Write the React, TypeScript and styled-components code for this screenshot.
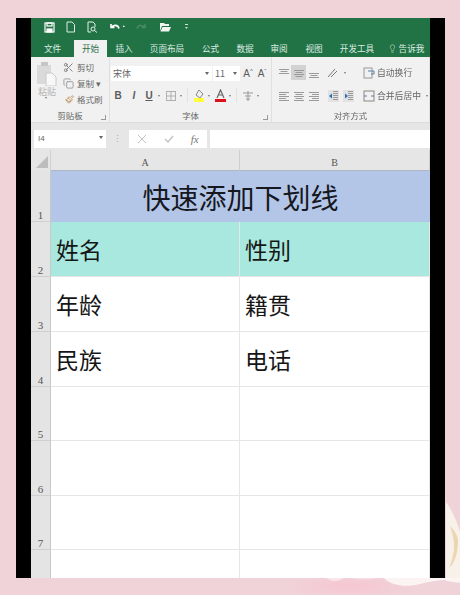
import * as React from 'react';
import styled, { createGlobalStyle } from 'styled-components';
import { Scissors, Copy, Paintbrush, Lightbulb } from 'lucide-react';

const CJK = `"Noto Sans CJK SC", "Liberation Sans", sans-serif`;

const GlobalStyle = createGlobalStyle`
  html, body { margin: 0; padding: 0; }
  body {
    width: 460px;
    height: 595px;
    overflow: hidden;
    background: #f0d3d9;
    font-family: ${CJK};
  }
`;

const Page = styled.div`
  position: relative;
  width: 460px;
  height: 595px;
  box-sizing: border-box;
  padding: 18px 15px 17px 16px;
  background:
    radial-gradient(ellipse 70px 14px at 350px 586px, #f6c6d1 0%, rgba(246, 198, 209, 0) 100%),
    #f0d3d9;
  overflow: hidden;
`;

const Petals = styled.svg`
  position: absolute;
  right: 0;
  bottom: 0;
`;

const Frame = styled.div`
  position: relative;
  width: 429px;
  height: 560px;
  box-sizing: border-box;
  border-left: 15px solid #000;
  border-right: 15px solid #000;
  background: #e6e6e6;
  display: flex;
  flex-direction: column;
  overflow: hidden;
`;

const Soft = styled.div`
  flex: none;
  display: flex;
  flex-direction: column;
  filter: blur(0.45px);
`;

const TitleBar = styled.div`
  height: 22px;
  background: #217346;
  display: flex;
  align-items: center;
  padding: 0 0 4px 13px;
  box-sizing: border-box;
  gap: 10px;
`;

const QuickIcon = styled.svg`
  flex: none;
  display: block;
`;

const TabBar = styled.div`
  height: 17px;
  background: #217346;
  display: flex;
`;

const Tab = styled.div<{ $w: number; $active?: boolean }>`
  width: ${p => p.$w}px;
  flex: none;
  display: flex;
  align-items: center;
  justify-content: center;
  gap: 2px;
  padding-bottom: 1px;
  box-sizing: border-box;
  font-size: 8.6px;
  white-space: nowrap;
  overflow: hidden;
  color: ${p => (p.$active ? '#2b6e48' : '#dcebe2')};
  background: ${p => (p.$active ? '#f1f1f1' : 'transparent')};
`;

const Ribbon = styled.div`
  height: 66px;
  background: #f1f1f1;
  display: flex;
  border-bottom: 1px solid #dcdcdc;
  box-sizing: border-box;
`;

const Group = styled.div<{ $w: number }>`
  width: ${p => p.$w}px;
  flex: none;
  box-sizing: border-box;
  border-right: 1px solid #e0e0e0;
  display: flex;
  flex-direction: column;
  position: relative;
`;

const GroupBody = styled.div`
  flex: 1;
  display: flex;
  min-height: 0;
`;

const GroupLabel = styled.div`
  height: 16px;
  font-size: 8.4px;
  line-height: 19px;
  text-align: center;
  color: #666;
`;

const Launcher = styled.span`
  position: absolute;
  right: 3px;
  bottom: 2px;
  width: 4px;
  height: 4px;
  border-right: 1px solid #999;
  border-bottom: 1px solid #999;
`;

const PasteCol = styled.div`
  width: 32px;
  flex: none;
  display: flex;
  flex-direction: column;
  align-items: center;
  padding-top: 5px;
  box-sizing: border-box;
  font-size: 9px;
  line-height: 11px;
  color: #b5b5b5;
`;

const ClipCol = styled.div`
  flex: 1;
  display: flex;
  flex-direction: column;
  gap: 2px;
  padding-top: 3px;
`;

const ClipItem = styled.div<{ $indent?: number }>`
  height: 14px;
  display: flex;
  align-items: center;
  gap: 3px;
  padding-left: ${p => p.$indent ?? 0}px;
  font-size: 8.5px;
  color: #6a6a6a;
  white-space: nowrap;
`;

const Stack = styled.div`
  flex: 1;
  display: flex;
  flex-direction: column;
  padding: 9px 0 0 1px;
  gap: 7px;
`;

const Line = styled.div`
  display: flex;
  align-items: center;
  height: 15px;
`;

const FontInput = styled.div<{ $w: number }>`
  width: ${p => p.$w}px;
  height: 15px;
  flex: none;
  box-sizing: border-box;
  background: #fff;
  font-size: 9px;
  line-height: 15px;
  padding-left: 2px;
  color: #666;
  position: relative;
  margin-right: 1px;
`;

const Caret = styled.span`
  position: absolute;
  right: 3px;
  top: 6px;
  border-left: 2px solid transparent;
  border-right: 2px solid transparent;
  border-top: 3px solid #666;
`;

const Glyph = styled.span<{ $w?: number; $bold?: boolean; $italic?: boolean; $under?: boolean }>`
  width: ${p => p.$w ?? 14}px;
  flex: none;
  text-align: center;
  font-family: "Liberation Sans", sans-serif;
  font-size: 10px;
  color: #5c5c5c;
  font-weight: ${p => (p.$bold ? 700 : 400)};
  font-style: ${p => (p.$italic ? 'italic' : 'normal')};
  text-decoration: ${p => (p.$under ? 'underline' : 'none')};
`;

const Sup = styled.sup`
  font-size: 6px;
  line-height: 0;
`;

const MiniCaret = styled.span`
  flex: none;
  width: 0;
  height: 0;
  margin: 0 5px 0 3px;
  border-left: 1.5px solid transparent;
  border-right: 1.5px solid transparent;
  border-top: 2.5px solid #777;
`;

const Sep = styled.span`
  flex: none;
  width: 1px;
  height: 15px;
  margin-right: 5px;
  background: #e2e2e2;
`;

const Columns = styled.div`
  flex: 1;
  display: flex;
  padding: 8px 0 0 4px;
  gap: 5px;
`;

const IconGrid = styled.div<{ $cols: number }>`
  display: grid;
  grid-template-columns: repeat(${p => p.$cols}, 15px);
  grid-auto-rows: 15px;
  row-gap: 8px;
  flex: none;
`;

const AlignCell = styled.div<{ $active?: boolean; $span?: number }>`
  display: flex;
  align-items: center;
  justify-content: ${p => (p.$span ? 'flex-start' : 'center')};
  grid-column: span ${p => p.$span ?? 1};
  background: ${p => (p.$active ? '#d2d2d2' : 'transparent')};
`;

const CmdCol = styled.div`
  display: flex;
  flex-direction: column;
  gap: 8px;
  margin-left: 2px;
`;

const Cmd = styled.div`
  height: 15px;
  display: flex;
  align-items: center;
  gap: 2px;
  font-size: 8.8px;
  color: #666;
  white-space: nowrap;
`;

const FormulaBar = styled.div`
  height: 27px;
  flex: none;
  background: #e6e6e6;
  display: flex;
  align-items: flex-end;
  padding: 0 0 2px 3px;
  box-sizing: border-box;
`;

const NameBox = styled.div`
  width: 72px;
  height: 18px;
  background: #fff;
  box-sizing: border-box;
  padding-left: 4px;
  font: 8px/18px "Liberation Sans", sans-serif;
  color: #666;
  position: relative;
  flex: none;
`;

const Dots = styled.div`
  width: 23px;
  flex: none;
  text-align: center;
  font: 9px/18px "Liberation Sans", sans-serif;
  color: #aaa;
`;

const FxBox = styled.div`
  width: 78px;
  height: 18px;
  background: #fff;
  flex: none;
  display: flex;
  align-items: center;
  justify-content: space-around;
  font-size: 11px;
  font-family: "Liberation Serif", serif;
  font-style: italic;
  color: #777;
  margin-right: 3px;
`;

const FormulaInput = styled.div`
  flex: 1;
  height: 18px;
  background: #fff;
`;

const Sheet = styled.div`
  flex: 1;
  display: grid;
  grid-template-columns: 20px 189px 190px;
  grid-template-rows: 21px 51px 55px 55px 55px 54px 55px 54px 55px;
  background: #fff;
  min-height: 0;
  overflow: hidden;
`;

const Corner = styled.div`
  background: #e6e6e6;
  border-right: 1px solid #d0d0d0;
  display: flex;
  align-items: flex-end;
  justify-content: flex-end;
  padding: 0 2px 3px 0;
  box-sizing: border-box;
`;

const ColHead = styled.div`
  background: #e6e6e6;
  border-right: 1px solid #cfcfcf;
  border-bottom: 1px solid #aeb6c4;
  box-sizing: border-box;
  display: flex;
  align-items: flex-end;
  justify-content: center;
  padding-bottom: 1px;
  font: 10px/12px "Liberation Serif", serif;
  color: #555;
`;

const RowHead = styled.div`
  background: #e4e4e4;
  border-bottom: 1px solid #cfcfcf;
  border-right: 1px solid #c8c8c8;
  box-sizing: border-box;
  display: flex;
  align-items: flex-end;
  justify-content: center;
  font: 11px/12px "Liberation Serif", serif;
  color: #555;
`;

const Cell = styled.div<{ $bg?: string }>`
  background: ${p => p.$bg ?? '#fff'};
  border-right: 1px solid #e6e6e6;
  border-bottom: 1px solid #e6e6e6;
  box-sizing: border-box;
  display: flex;
  align-items: center;
  padding: 0 0 0 5px;
  font-size: 23px;
  color: #161616;
`;

const TitleCell = styled.div`
  grid-column: span 2;
  background: #b4c6e7;
  display: flex;
  align-items: center;
  justify-content: center;
  padding-top: 1px;
  font-size: 28px;
  color: #15181f;
`;

const tabs: { label: string; w: number; active?: boolean }[] = [
  { label: '文件', w: 43 },
  { label: '开始', w: 33, active: true },
  { label: '插入', w: 34 },
  { label: '页面布局', w: 52 },
  { label: '公式', w: 35 },
  { label: '数据', w: 34 },
  { label: '审阅', w: 34 },
  { label: '视图', w: 36 },
  { label: '开发工具', w: 50 },
];

// row 8 is cut off by the frame before its number shows
const rows: { head: string; a: string; b: string }[] = [
  { head: '2', a: '姓名', b: '性别' },
  { head: '3', a: '年龄', b: '籍贯' },
  { head: '4', a: '民族', b: '电话' },
  { head: '5', a: '', b: '' },
  { head: '6', a: '', b: '' },
  { head: '7', a: '', b: '' },
  { head: '', a: '', b: '' },
];

const Bars = ({ v, h, active }: { v: number[]; h: 'l' | 'c' | 'r'; active?: boolean }) => (
  <AlignCell $active={active}>
    <svg width="12" height="12" viewBox="0 0 12 12">
      {v.map((y, i) => {
        const w = i % 2 ? 7 : 10;
        const x = h === 'l' ? 1 : h === 'c' ? (12 - w) / 2 : 11 - w;
        return <rect key={i} x={x} y={y} width={w} height="1" fill="#9a9a9a" />;
      })}
    </svg>
  </AlignCell>
);

const Indent = ({ flip }: { flip?: boolean }) => (
  <AlignCell>
    <svg width="11" height="12" viewBox="0 0 11 12">
      <rect x="0" y="0" width="11" height="12" fill="#e2e2e2" />
      {[1, 3, 5, 7, 9].map(y => <rect key={y} x="5" y={y} width="5" height="1" fill="#9a9a9a" />)}
      <path d={flip ? 'M5 6L2 3.500v5z' : 'M1 6l3-2.500v5z'} fill="#2f6fa8" />
    </svg>
  </AlignCell>
);

export default function App() {
  return (
    <Page>
      <GlobalStyle />
      <Petals width="140" height="115" viewBox="0 0 140 115">
        <path d="M126 22C132 30 137 42 140 52V103L126 101V22Z" fill="#f8f1ea" />
        <path d="M130 46C134 58 137 70 129 88C136 82 138 70 138 60C137 54 134 50 130 46Z" fill="#ecd6b0" />
        <path d="M64 98C70 105 85 108 100 104C108 102 118 100 126 100C132 102 136 103 140 101V98H64Z" fill="#fbf4f3" />
        <path d="M6 98C12 102 18 102 24 98Z" fill="#f8e6e8" />
        <path d="M30 98C40 100 50 100 58 98Z" fill="#f7dde2" />
      </Petals>
      <Frame>
        <Soft>
          <TitleBar>
            <QuickIcon width="11" height="11" viewBox="0 0 11 11" fill="none" stroke="#fff" strokeWidth="1.2">
              <rect x="1" y="1" width="9" height="9" />
              <rect x="3" y="1" width="5" height="3" />
              <rect x="3" y="7" width="5" height="3" fill="#fff" />
            </QuickIcon>
            <QuickIcon width="11" height="12" viewBox="0 0 11 12" fill="none" stroke="#dcebe2">
              <path d="M2 1h5l2.500 2.500V11H2z" />
            </QuickIcon>
            <QuickIcon width="12" height="12" viewBox="0 0 12 12" fill="none" stroke="#e6f0ea">
              <path d="M2 1h5l2 2v3M5 11H2V1" />
              <circle cx="7" cy="8" r="2" />
              <path d="M8.500 9.500L11 11.500" />
            </QuickIcon>
            <QuickIcon width="17" height="11" viewBox="0 0 17 11" fill="none" stroke="#fff" strokeWidth="1.6">
              <path d="M3 2v3.500h3.500M3.500 5.500C5 2.500 10 2.500 11 6.500" />
              <path d="M15 4l1.500 0-.75 1z" fill="#fff" strokeWidth="0.6" />
            </QuickIcon>
            <QuickIcon width="14" height="11" viewBox="0 0 14 11" fill="none" stroke="#4c8d69" strokeWidth="1.4">
              <path d="M10 2v3.500H6.500M9.500 5.500C8 2.500 3 2.500 2 6.500" />
            </QuickIcon>
            <QuickIcon width="12" height="10" viewBox="0 0 12 10" fill="#f2f6f3">
              <path d="M1 1h4l1 1h4v2H3L1 9zM3.500 5H12l-2 4.500H1.500z" />
            </QuickIcon>
            <QuickIcon width="12" height="6" viewBox="0 0 12 6" fill="#cfe2d7">
              <rect x="4" y="0" width="3" height="1" />
              <path d="M4 3h3l-1.500 2z" />
            </QuickIcon>
          </TitleBar>
          <TabBar>
            {tabs.map(t => (
              <Tab key={t.label} $w={t.w} $active={t.active}>{t.label}</Tab>
            ))}
            <Tab $w={48}>
              <Lightbulb size={9} strokeWidth={1.4} />
              告诉我
            </Tab>
          </TabBar>
          <Ribbon>
            <Group $w={79}>
              <GroupBody>
                <PasteCol>
                  <svg width="20" height="24" viewBox="0 0 20 24">
                    <rect x="0" y="3" width="14" height="19" fill="#dadada" />
                    <rect x="4" y="0" width="7" height="4" fill="#c6c6c6" />
                    <path d="M9 11h6l4 4v9H9z" fill="#f8f8f8" stroke="#cacaca" />
                  </svg>
                  粘贴
                  <MiniCaret />
                </PasteCol>
                <ClipCol>
                  <ClipItem><Scissors size={11} color="#7d7d7d" />剪切</ClipItem>
                  <ClipItem><Copy size={11} color="#9a9a9a" />复制 ▾</ClipItem>
                  <ClipItem $indent={2}><Paintbrush size={9} color="#b78a4a" />格式刷</ClipItem>
                </ClipCol>
              </GroupBody>
              <GroupLabel>剪贴板</GroupLabel>
              <Launcher />
            </Group>
            <Group $w={162}>
              <GroupBody>
                <Stack>
                  <Line>
                    <FontInput $w={101}>宋体<Caret /></FontInput>
                    <FontInput $w={27}>11<Caret /></FontInput>
                    <Glyph $w={14}>A<Sup>^</Sup></Glyph>
                    <Glyph $w={14}>A<Sup>ˇ</Sup></Glyph>
                  </Line>
                  <Line>
                    <Glyph $bold>B</Glyph>
                    <Glyph $w={18} $italic $bold>I</Glyph>
                    <Glyph $w={12} $under $bold>U</Glyph>
                    <MiniCaret />
                    <svg width="12" height="12" viewBox="0 0 12 12" fill="none" stroke="#b0b0b0">
                      <rect x="1.500" y="1.500" width="9" height="9" />
                      <path d="M6 1.500v9M1.500 6h9" />
                    </svg>
                    <MiniCaret />
                    <Sep />
                    <svg width="12" height="13" viewBox="0 0 12 13">
                      <path d="M6 1l4 4-3 4-4-3z" fill="none" stroke="#888" />
                      <rect x="1" y="9" width="10" height="4" fill="#ffff3a" />
                    </svg>
                    <MiniCaret />
                    <svg width="11" height="13" viewBox="0 0 11 13">
                      <path d="M2 9l3.500-8L9 9M3.500 6h4" fill="none" stroke="#666" strokeWidth="1.200" />
                      <rect x="0" y="10" width="11" height="3" fill="#e0101a" />
                    </svg>
                    <MiniCaret />
                    <Sep />
                    <svg width="12" height="12" viewBox="0 0 12 12" fill="none" stroke="#999">
                      <path d="M1 3h10M6 1v10M3 6h6M4 9h4" />
                    </svg>
                    <MiniCaret />
                  </Line>
                </Stack>
              </GroupBody>
              <GroupLabel>字体</GroupLabel>
              <Launcher />
            </Group>
            <Group $w={158}>
              <GroupBody>
                <Columns>
                  <IconGrid $cols={3}>
                    <Bars v={[2, 4, 6]} h="c" />
                    <Bars v={[3, 5, 7, 9]} h="c" active />
                    <Bars v={[6, 8, 10]} h="c" />
                    <Bars v={[2, 4, 6, 8, 10]} h="l" />
                    <Bars v={[2, 4, 6, 8, 10]} h="c" />
                    <Bars v={[2, 4, 6, 8, 10]} h="r" />
                  </IconGrid>
                  <IconGrid $cols={2}>
                    <AlignCell $span={2}>
                      <svg width="15" height="12" viewBox="0 0 15 12" fill="none" stroke="#777">
                        <path d="M2 10L9 2M5 10l6-6" />
                      </svg>
                      <MiniCaret />
                    </AlignCell>
                    <Indent />
                    <Indent flip />
                  </IconGrid>
                  <CmdCol>
                    <Cmd>
                      <svg width="12" height="12" viewBox="0 0 12 12" fill="none" stroke="#999">
                        <rect x="1" y="1" width="8" height="10" />
                        <path d="M5 4h6v3H8" stroke="#5a7fa8" />
                      </svg>
                      自动换行
                    </Cmd>
                    <Cmd>
                      <svg width="12" height="12" viewBox="0 0 12 12" fill="none" stroke="#888">
                        <rect x="1" y="1" width="10" height="10" />
                        <path d="M1 6h3M8 6h3" stroke="#5a7fa8" />
                      </svg>
                      合并后居中
                      <MiniCaret />
                    </Cmd>
                  </CmdCol>
                </Columns>
              </GroupBody>
              <GroupLabel>对齐方式</GroupLabel>
            </Group>
          </Ribbon>
          <FormulaBar>
            <NameBox>I4<Caret /></NameBox>
            <Dots>⋮</Dots>
            <FxBox>
              <svg width="10" height="10" viewBox="0 0 10 10" stroke="#c2c2c2" fill="none"><path d="M1 1l8 8M9 1L1 9" /></svg>
              <svg width="10" height="10" viewBox="0 0 10 10" stroke="#c2c2c2" fill="none" strokeWidth="1.4"><path d="M1 5l3 3 5-6" /></svg>
              <span>fx</span>
            </FxBox>
            <FormulaInput />
          </FormulaBar>
        </Soft>
        <Sheet>
          <Corner>
            <svg width="12" height="12" viewBox="0 0 12 12"><path d="M12 0v12H0z" fill="#bdbdbd" /></svg>
          </Corner>
          <ColHead>A</ColHead>
          <ColHead>B</ColHead>
          <RowHead>1</RowHead>
          <TitleCell>快速添加下划线</TitleCell>
          {rows.map((r, i) => (
            <React.Fragment key={i}>
              <RowHead>{r.head}</RowHead>
              <Cell $bg={i === 0 ? '#a8e8de' : undefined}>{r.a}</Cell>
              <Cell $bg={i === 0 ? '#a8e8de' : undefined}>{r.b}</Cell>
            </React.Fragment>
          ))}
        </Sheet>
      </Frame>
    </Page>
  );
}
